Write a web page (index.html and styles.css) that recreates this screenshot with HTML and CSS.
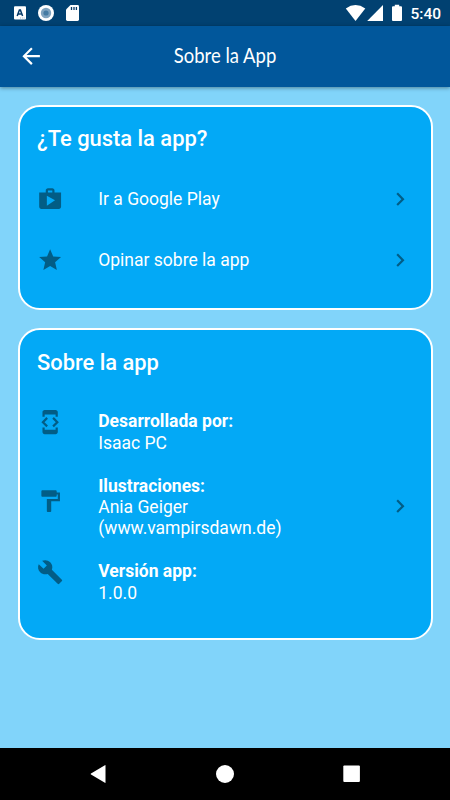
FILE: index.html
```html
<!DOCTYPE html>
<html lang="es">
<head>
<meta charset="utf-8">
<title>Sobre la App</title>
<link rel="stylesheet" href="styles.css">
</head>
<body>
<div class="screen">
  <div class="status">
    <svg class="notifications" width="90" height="26" viewBox="0 0 90 26">
      <rect x="14" y="6.3" width="12" height="13.2" rx="1" fill="#fff"/>
      <path d="M17.2 16l2.2-6h1l2.2 6M18 14h3.8" fill="none" stroke="#063a68" stroke-width="1.5"/>
      <path d="M20 18h5" stroke="#9bb3c8" stroke-width="1" stroke-dasharray="1 .8"/>
      <circle cx="46" cy="13" r="8" fill="#fff"/>
      <circle cx="46" cy="13" r="5.2" fill="#7fa3bf"/>
      <circle cx="46" cy="13" r="2.6" fill="#457ba3"/>
      <path d="M70.5 5H77.600q1.400 0 1.400 1.400V19.600q0 1.400-1.400 1.400H67.400q-1.400 0-1.400-1.400V9.500z" fill="#fff"/>
      <path d="M71.500 7v3M74 7v3M76.400 7v3" stroke="#063a68" stroke-width="1.300"/>
    </svg>
    <div class="system">
      <svg width="60" height="26" viewBox="344 0 60 26" fill="#fff">
        <path d="M346.800 8.400Q356.500 1.800 366.300 8.400L356.500 21z"/>
        <path d="M384 5v16h-15.800z"/>
        <path d="M395.800 4.800h4.400v1.500h1.800q1 0 1 1v12.700q0 1-1 1h-8q-1 0-1-1V7.300q0-1 1-1h1.800z"/>
      </svg>
      <span class="clock">5:40</span>
    </div>
  </div>
  <header class="appbar">
    <svg class="back" width="26.250" height="26.250" viewBox="0 0 24 24"><path fill="#fff" d="M20 11H7.830l5.590-5.590L12 4l-8 8 8 8 1.410-1.410L7.830 13H20v-2z"/></svg>
    <h1 class="heading">Sobre la App</h1>
  </header>
  <main class="content">
    <section class="card">
      <h2 class="title">¿Te gusta la app?</h2>
      <div class="row">
        <svg class="icon" viewBox="0 0 24 24"><path d="M16 6V4c0-1.110-.89-2-2-2h-4c-1.110 0-2 .89-2 2v2H2v13c0 1.110.89 2 2 2h16c1.110 0 2-.89 2-2V6h-6zm-6-2h4v2h-4V4zM9 18V9l7.500 4L9 18z"/></svg>
        <p class="text">Ir a Google Play</p>
        <svg class="icon" viewBox="0 0 24 24"><path d="M10 6L8.590 7.410 13.170 12l-4.580 4.590L10 18l6-6z"/></svg>
      </div>
      <div class="row">
        <svg class="icon" viewBox="0 0 24 24"><path d="M12 17.270L18.180 21l-1.640-7.030L22 9.240l-7.190-.61L12 2 9.190 8.630 2 9.240l5.460 4.730L5.820 21z"/></svg>
        <p class="text">Opinar sobre la app</p>
        <svg class="icon" viewBox="0 0 24 24"><path d="M10 6L8.590 7.410 13.170 12l-4.580 4.590L10 18l6-6z"/></svg>
      </div>
    </section>
    <section class="card card-about">
      <h2 class="title">Sobre la app</h2>
      <div class="row row-two">
        <svg class="icon icon-top" viewBox="0 0 24 24"><path d="M7 5h10v2h2V3c0-1.100-.9-1.990-2-1.990L7 1c-1.100 0-2 .9-2 2v4h2V5zm8.410 11.590L20 12l-4.590-4.590L14 8.830 17.170 12 14 15.170l1.410 1.420zM10 15.170L6.830 12 10 8.830 8.590 7.410 4 12l4.590 4.590L10 15.170zM17 19H7v-2H5v4c0 1.100.9 2 2 2h10c1.100 0 2-.9 2-2v-4h-2v2z"/></svg>
        <p class="text"><b>Desarrollada por:</b><br>Isaac PC</p>
      </div>
      <div class="row row-three">
        <svg class="icon" viewBox="0 0 24 24"><path d="M18 4V3c0-.55-.45-1-1-1H5c-.55 0-1 .45-1 1v4c0 .55.45 1 1 1h12c.55 0 1-.45 1-1V6h1v4H9v11c0 .55.45 1 1 1h2c.55 0 1-.45 1-1v-9h8V4h-3z"/></svg>
        <p class="text"><b>Ilustraciones:</b><br>Ania Geiger<br>(www.vampirsdawn.de)</p>
        <svg class="icon chevron" viewBox="0 0 24 24"><path d="M10 6L8.590 7.410 13.170 12l-4.580 4.590L10 18l6-6z"/></svg>
      </div>
      <div class="row row-two">
        <svg class="icon icon-top" viewBox="0 0 24 24"><path d="M22.700 19l-9.100-9.100c.9-2.300.4-5-1.500-6.900-2-2-5-2.400-7.400-1.300L9 6 6 9 1.600 4.700C.4 7.100.9 10.100 2.900 12.100c1.900 1.900 4.600 2.400 6.900 1.500l9.100 9.100c.4.4 1 .4 1.400 0l2.300-2.300c.5-.4.5-1.100.1-1.400z"/></svg>
        <p class="text"><b>Versión app:</b><br>1.0.0</p>
      </div>
    </section>
  </main>
  <nav class="navbar">
    <svg width="450" height="52" viewBox="0 0 450 52" fill="#fff">
      <path d="M105.500 17.400v17.200q0 .5-.6.2L91 26.600q-.8-.6 0-1.200l13.900-8.200q.6-.3.600.2z"/>
      <circle cx="225" cy="26" r="9"/>
      <rect x="343.300" y="17.500" width="16.600" height="16.600" rx="1"/>
    </svg>
  </nav>
</div>
</body>
</html>
```
FILE: styles.css
```css
* { box-sizing: border-box; }
body { margin: 0; font-family: Roboto, "Liberation Sans", sans-serif; color: #fff; }
h1, h2, p { margin: 0; }
svg { display: block; flex: none; }

.screen {
  display: flex;
  flex-direction: column;
  width: 450px;
  height: 800px;
  overflow: hidden;
  background: #81d4fa;
}

.status {
  display: flex;
  justify-content: space-between;
  flex: none;
  height: 26px;
  background: #014171;
}
.system { display: flex; gap: 7px; padding-right: 9px; }
.clock { font-size: 15.5px; font-weight: 500; line-height: 28px; }

.appbar {
  display: grid;
  grid-template-columns: 60px 1fr 60px;
  align-items: center;
  flex: none;
  height: 61px;
  background: #01579b;
  box-shadow: 0 1px 4px rgba(0, 0, 0, .4);
}
.back { margin-left: 17.5px; }
.heading {
  justify-self: center;
  margin-bottom: 3px;
  font: 400 22px/30px Lato, sans-serif;
  white-space: nowrap;
  transform: scaleX(.84);
}

.content {
  display: flex;
  flex-direction: column;
  flex: 1;
  gap: 18px;
  padding: 18px 17.5px 0;
}
.card {
  height: 205px;
  padding: 18px 17.5px;
  border: 2px solid #fff;
  border-radius: 22px;
  background: #03a9f6;
}
.card-about { height: 312px; }
.title { font-size: 21.9px; font-weight: 500; line-height: 28px; margin-bottom: 15.5px; }
.row {
  display: flex;
  align-items: center;
  height: 61.25px;
}
.card-about .title { padding-top: 1px; margin-bottom: 20px; }
.icon { width: 26.25px; height: 26.25px; fill: #025d86; }
.icon-top { align-self: flex-start; margin-top: 12px; }
.text { flex: 1; margin-left: 35px; padding-top: 1px; font-size: 17.5px; line-height: 21.3px; }
.row-two { height: 70px; }
.row-two .text { padding-top: 0; line-height: 22px; }
.row-three .text { padding-top: 0; line-height: 21px; }
.row-three { height: 80px; }
.row-three .icon { margin-bottom: 11px; }
.row-three .chevron { margin-bottom: 2px; }

.navbar {
  flex: none;
  height: 52px;
  background: #000;
}
```
